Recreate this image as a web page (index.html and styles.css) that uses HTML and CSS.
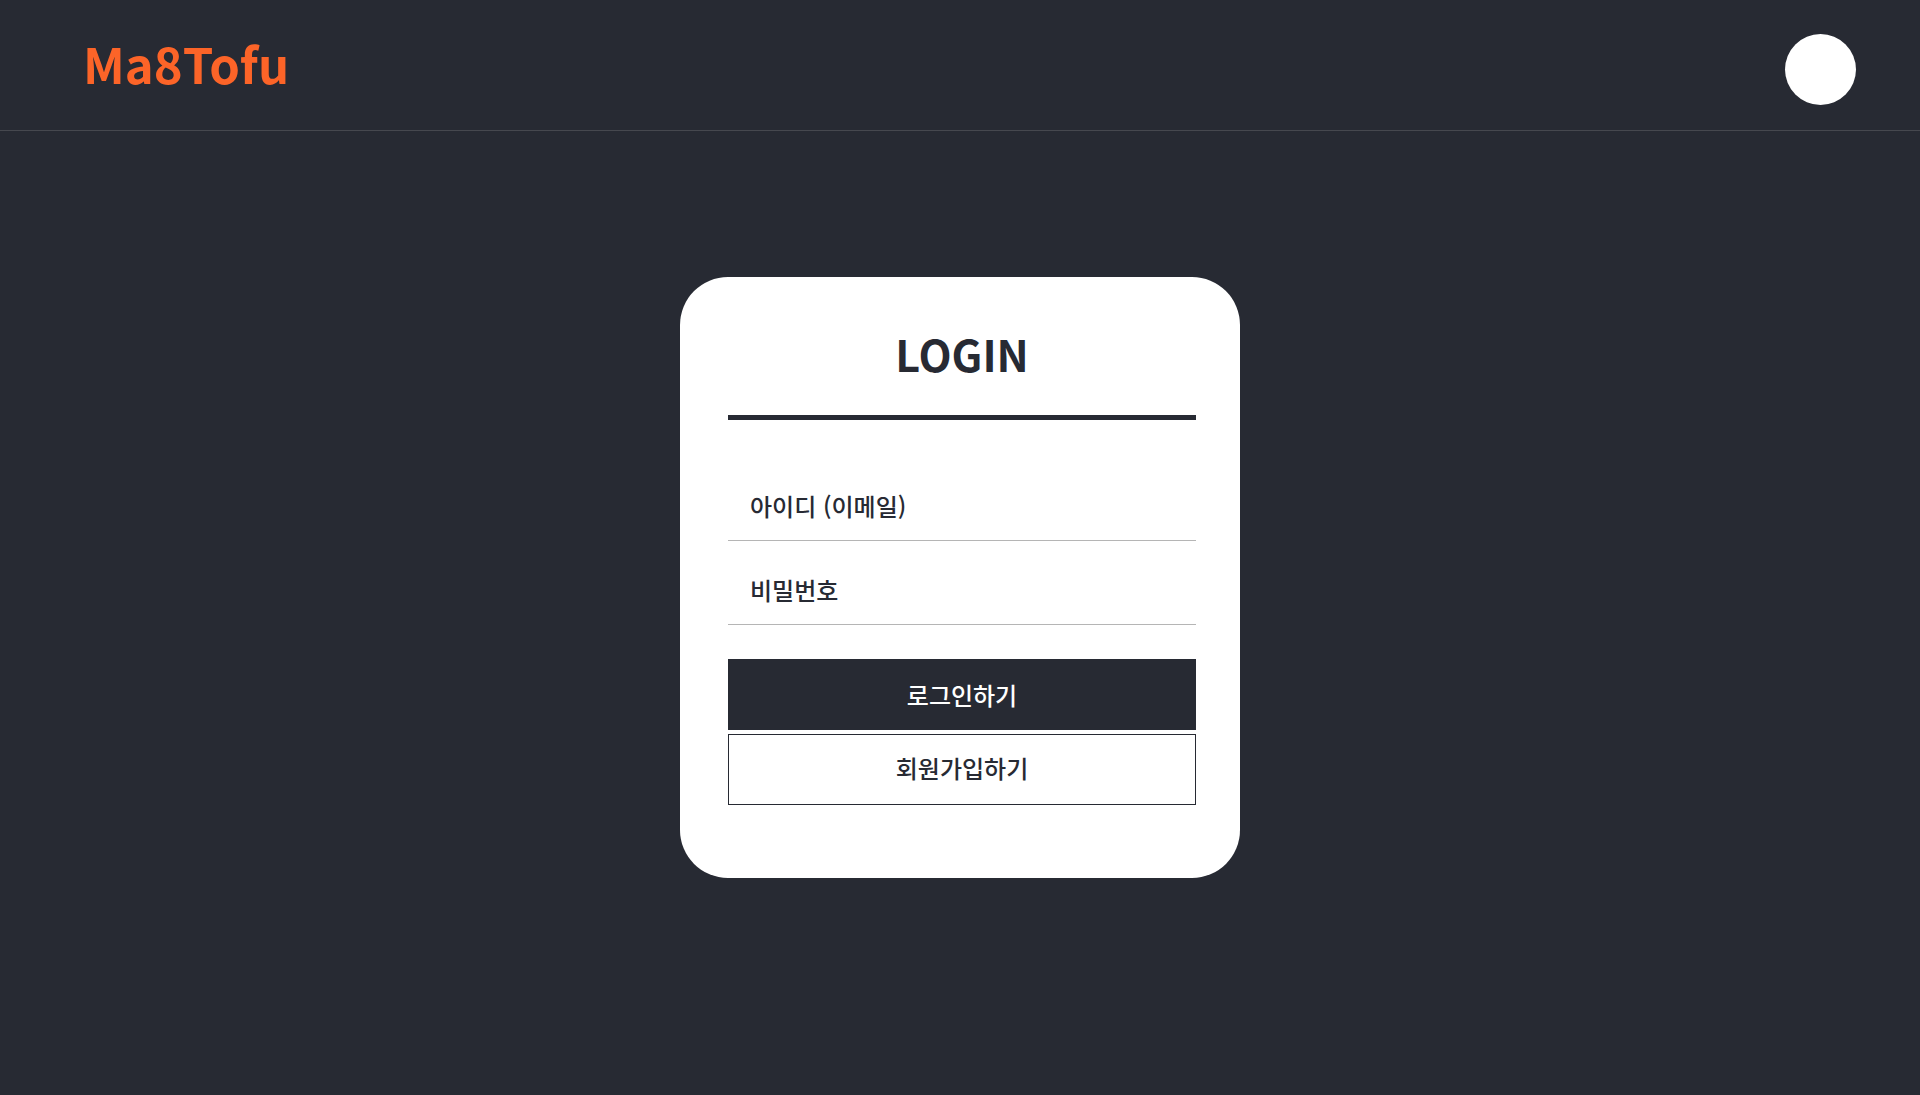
FILE: index.html
```html
<!DOCTYPE html>
<html lang="ko">
<head>
<meta charset="utf-8">
<title>Ma8Tofu</title>
<link rel="stylesheet" href="styles.css">
</head>
<body>
<header class="header">
  <a class="brand" href="#">Ma8Tofu</a>
  <button class="avatar" type="button" aria-label="프로필"></button>
</header>
<main class="main">
  <form class="card">
    <h1 class="title">LOGIN</h1>
    <input class="field" type="email" placeholder="아이디 (이메일)" aria-label="아이디 (이메일)">
    <input class="field" type="password" placeholder="비밀번호" aria-label="비밀번호">
    <div class="actions">
      <button class="button button-primary" type="submit">로그인하기</button>
      <button class="button button-outline" type="button">회원가입하기</button>
    </div>
  </form>
</main>
</body>
</html>
```
FILE: styles.css
```css
* {
  box-sizing: border-box;
}

body {
  margin: 0;
  min-height: 100vh;
  display: flex;
  flex-direction: column;
  background: #272a33;
  color: #272a33;
  font-family: "Noto Sans CJK KR", sans-serif;
}

.header {
  display: flex;
  justify-content: space-between;
  align-items: flex-start;
  padding: 34px 64px 25px 83px;
  border-bottom: 1px solid #46484f;
}

.brand {
  color: #fc6428;
  font-size: 49px;
  font-weight: 700;
  line-height: 58px;
  text-decoration: none;
}

.avatar {
  width: 71px;
  height: 71px;
  padding: 0;
  border: 0;
  border-radius: 50%;
  background: #fff;
}

.main {
  flex: 1;
  display: flex;
  justify-content: center;
  align-items: flex-start;
  padding: 146px 24px;
}

.card {
  display: flex;
  flex-direction: column;
  width: 560px;
  padding: 44px 44px 73px 48px;
  border-radius: 48px;
  background: #fff;
}

.title {
  margin: 0 0 37px;
  padding-bottom: 30px;
  border-bottom: 5px solid #272a33;
  font-size: 43px;
  font-weight: 700;
  line-height: 64px;
  text-align: center;
}

.field {
  height: 84px;
  padding: 26px 22px 12px;
  border: 0;
  border-bottom: 1px solid #b5b5b5;
  border-radius: 0;
  background: transparent;
  color: inherit;
  font: 500 24px/36px "Noto Sans CJK KR", sans-serif;
}

.field::placeholder {
  color: inherit;
  opacity: 1;
}

.actions {
  display: flex;
  flex-direction: column;
  gap: 4px;
  margin-top: 34px;
}

.button {
  height: 71px;
  padding: 0;
  border: 1px solid #272a33;
  font: 500 24px/36px "Noto Sans CJK KR", sans-serif;
}

.button-primary {
  background: #272a33;
  color: #fff;
}

.button-outline {
  padding-bottom: 4px;
  background: #fff;
  color: #272a33;
}
```
